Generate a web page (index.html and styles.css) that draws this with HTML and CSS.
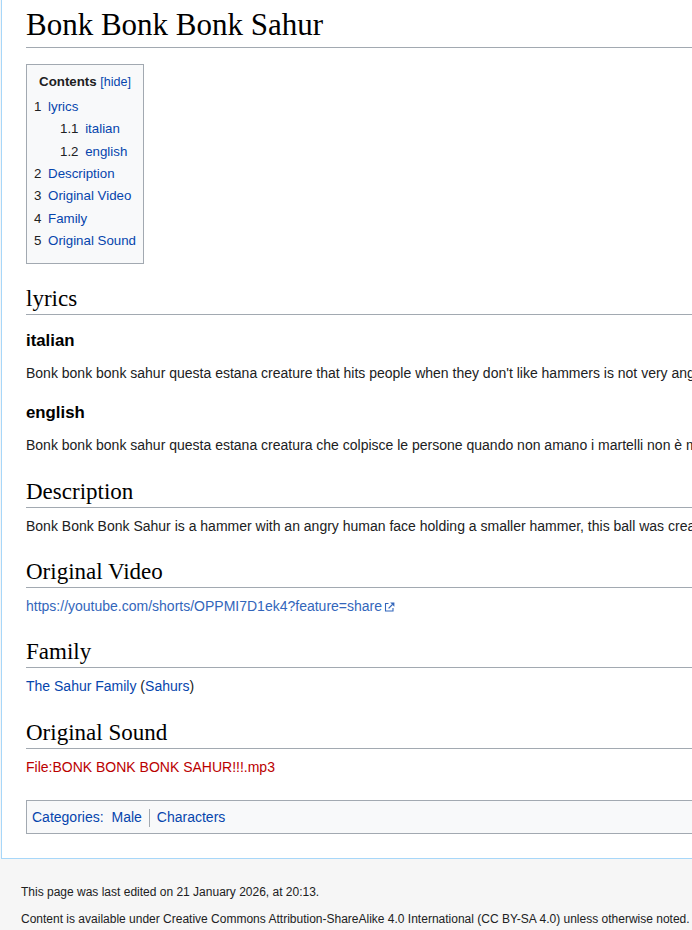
FILE: index.html
```html
<!DOCTYPE html>
<html lang="en">
<head>
<meta charset="utf-8">
<title>Bonk Bonk Bonk Sahur</title>
<link rel="stylesheet" href="styles.css">
</head>
<body>
<div class="page">
  <div class="content">
    <h1 class="title">Bonk Bonk Bonk Sahur</h1>
    <div class="toc">
      <div class="toc-title"><span class="toc-heading">Contents</span> <span class="toc-toggle">[<a href="#">hide</a>]</span></div>
      <ul class="toc-list">
        <li><a href="#lyrics"><span class="num">1</span><span class="txt">lyrics</span></a>
          <ul class="toc-sub">
            <li><a href="#italian"><span class="num">1.1</span><span class="txt">italian</span></a></li>
            <li><a href="#english"><span class="num">1.2</span><span class="txt">english</span></a></li>
          </ul>
        </li>
        <li><a href="#description"><span class="num">2</span><span class="txt">Description</span></a></li>
        <li><a href="#video"><span class="num">3</span><span class="txt">Original Video</span></a></li>
        <li><a href="#family"><span class="num">4</span><span class="txt">Family</span></a></li>
        <li><a href="#sound"><span class="num">5</span><span class="txt">Original Sound</span></a></li>
      </ul>
    </div>

    <h2 id="lyrics">lyrics</h2>
    <h3 id="italian">italian</h3>
    <p>Bonk bonk bonk sahur questa estana creature that hits people when they don't like hammers is not very angry</p>
    <h3 id="english">english</h3>
    <p>Bonk bonk bonk sahur questa estana creatura che colpisce le persone quando non amano i martelli non è molto arrabbiata</p>

    <h2 id="description">Description</h2>
    <p>Bonk Bonk Bonk Sahur is a hammer with an angry human face holding a smaller hammer, this ball was created</p>

    <h2 id="video">Original Video</h2>
    <p><a class="ext" href="#">https://youtube.com/shorts/OPPMI7D1ek4?feature=share<svg class="ext-icon" width="11" height="10" viewBox="0 0 11 10" aria-hidden="true"><path d="M4.5 1.5H1.5V9H9V6" fill="none" stroke="#3366bb" stroke-width="1.1"/><path d="M4.6 6.4L8.6 2.4" fill="none" stroke="#3366bb" stroke-width="1.3"/><path d="M6.2 0.6H10.4V4.8Z" fill="#3366bb"/></svg></a></p>

    <h2 id="family">Family</h2>
    <p><a href="#">The Sahur Family</a> (<a href="#">Sahurs</a>)</p>

    <h2 id="sound">Original Sound</h2>
    <p><a class="new" href="#">File:BONK BONK BONK SAHUR!!!.mp3</a></p>

    <div class="catlinks">
      <a href="#">Categories</a><a href="#" class="colon">:</a>
      <ul class="cat-list"><li><a href="#">Male</a></li><li><a href="#">Characters</a></li></ul>
    </div>
  </div>

  <div class="footer">
    <ul class="footer-info">
      <li>This page was last edited on 21 January 2026, at 20:13.</li>
      <li>Content is available under Creative Commons Attribution-ShareAlike 4.0 International (CC BY-SA 4.0) unless otherwise noted.</li>
    </ul>
  </div>
</div>
</body>
</html>
```

FILE: styles.css
```css
html, body {
  margin: 0;
  padding: 0;
  overflow: hidden;
}

body {
  background: #f6f6f6;
  font-family: "Liberation Sans", Arial, sans-serif;
  color: #202122;
}

.page {
  width: 1600px;
}

a {
  color: #0645ad;
  text-decoration: none;
}

.content {
  margin-left: 1px;
  background: #ffffff;
  border-left: 1px solid #a7d7f9;
  border-bottom: 1px solid #a7d7f9;
  padding: 6px 24px 24px 24px;
  font-size: 14px;
  line-height: 22.4px;
}

.title {
  margin: 0 0 16px 0;
  padding: 0 0 3px 0;
  font-family: "Liberation Serif", Georgia, serif;
  font-weight: normal;
  font-size: 31px;
  line-height: 38px;
  color: #000;
  border-bottom: 1px solid #a2a9b1;
}

.toc {
  display: table;
  border: 1px solid #a2a9b1;
  background: #f8f9fa;
  padding: 7px;
  font-size: 13.3px;
  margin-bottom: 1px;
}

.toc-title {
  text-align: center;
  line-height: 20px;
}

.toc-heading {
  font-weight: bold;
  color: #202122;
}

.toc-toggle {
  font-size: 12.5px;
  color: #0645ad;
}

.toc-list {
  list-style: none;
  margin: 4px 0;
  padding: 0;
  line-height: 22.33px;
}

.toc-list li {
  margin: 0;
  padding: 0;
}

.toc-sub {
  list-style: none;
  margin: 0 0 0 26px;
  padding: 0;
}

.toc .num {
  color: #202122;
  padding-right: 6.65px;
}

h2 {
  margin: 20px 0 4px 0;
  padding: 0;
  font-family: "Liberation Serif", Georgia, serif;
  font-weight: normal;
  font-size: 23px;
  line-height: 29.9px;
  color: #000;
  border-bottom: 1px solid #a2a9b1;
}

h3 {
  margin: 4px 0 0 0;
  padding: 9px 0 0 0;
  font-size: 16.8px;
  line-height: 26.88px;
  font-weight: bold;
  color: #000;
}

p {
  margin: 7px 0;
  white-space: nowrap;
}

a.ext {
  color: #3366bb;
}

.ext-icon {
  display: inline-block;
  vertical-align: -1px;
  margin-left: 2px;
}

a.new {
  color: #ba0000;
}

.catlinks {
  margin-top: 22px;
  border: 1px solid #a2a9b1;
  background: #f8f9fa;
  padding: 5px;
  line-height: 22.4px;
}

.cat-list {
  display: inline;
  margin: 0;
  padding: 0;
  list-style: none;
}

.cat-list li {
  display: inline-block;
  line-height: 17.5px;
  padding: 0 7px;
  border-left: 1px solid #a2a9b1;
  margin: 0;
}

.cat-list li:first-child {
  border-left: 0;
  padding-left: 4px;
}

.footer {
  padding: 20px 0 0 21px;
  font-size: 12px;
  color: #202122;
}

.footer-info {
  list-style: none;
  margin: 0;
  padding: 0;
}

.footer-info li {
  padding: 5px 0;
  line-height: 17px;
  white-space: nowrap;
}
```
